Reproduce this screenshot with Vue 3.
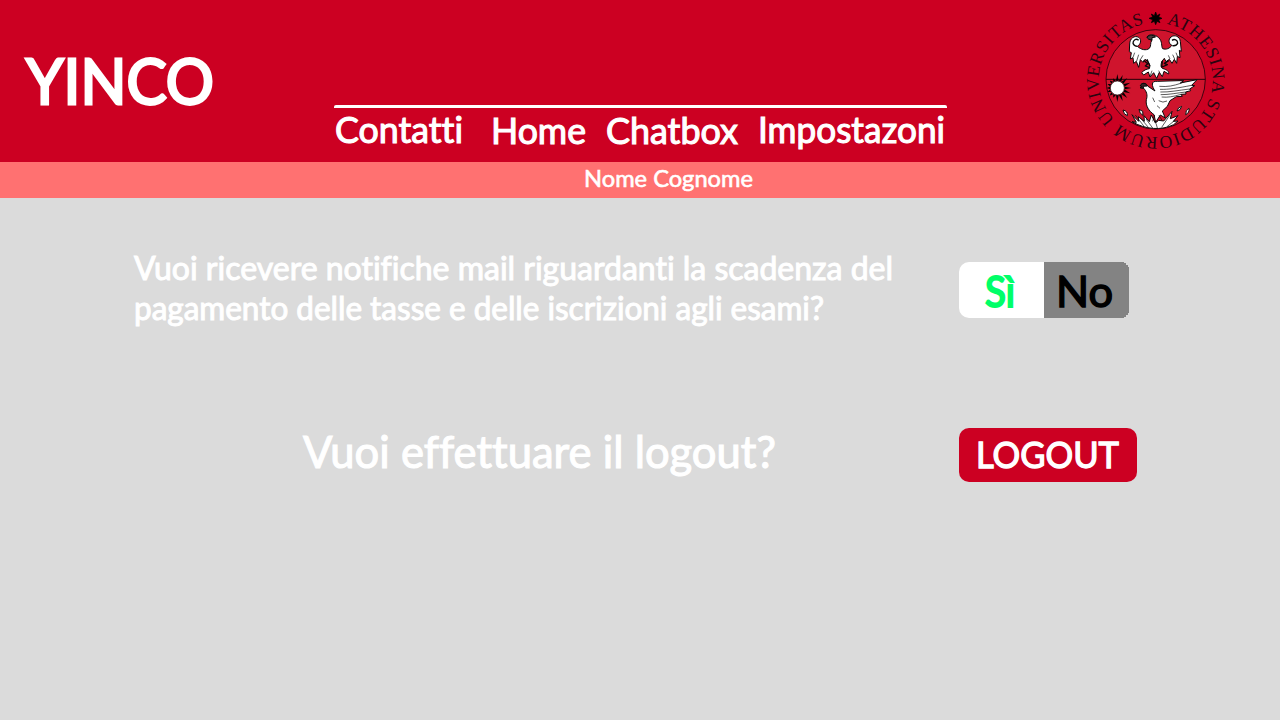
<script setup>
const nav = [
  { label: 'Contatti', width: 128, y: 143 },
  { label: 'Home', width: 95, y: 143.5 },
  { label: 'Chatbox', width: 132, y: 143.5 },
  { label: 'Impostazoni', width: 187, y: 142.5 },
]
const rays = Array.from({ length: 16 }, (_, i) => i * 22.5)
</script>

<template>
  <div class="page">
    <header class="top">
      <svg class="word brand" width="188" height="60"><text x="0" y="54" textLength="188" lengthAdjust="spacingAndGlyphs">YINCO</text></svg>
      <nav class="menu">
        <svg v-for="item in nav" :key="item.label" class="word item" :width="item.width" height="54">
          <text x="0" :y="item.y - 108" :textLength="item.width" lengthAdjust="spacingAndGlyphs">{{ item.label }}</text>
        </svg>
      </nav>
      <svg class="seal" width="160" height="160" viewBox="0 0 480 480">
        <defs>
          <path id="ring" d="M239 69A171 171 0 0 1 239 411A171 171 0 0 1 239 69" />
        </defs>
        <circle cx="239" cy="238" r="149" fill="#cf142d" stroke="#220008" stroke-width="2.5" />
        <path d="M90 238H388" stroke="#220008" stroke-width="3" />
        <text class="motto"><textPath href="#ring" startOffset="33" textLength="1006">ATHESINA STUDIORUM UNIVERSITAS</textPath></text>
        <path d="M239 36L243 47L252 42L248 51L258 55L248 59L252 68L243 64L239 74L235 64L226 68L230 59L219 55L230 51L226 42L235 47Z" fill="#000" stroke="#000" stroke-width="2" />
        <!-- upper eagle -->
        <g stroke="#090909" stroke-width="3" stroke-linejoin="round" fill="#fff">
          <path d="M228 120C220 119 214 116 213 111C218 102 236 102 248 113C260 124 255 139 260 146C271 150 281 145 288 136C278 133 276 118 285 111C296 103 311 109 313 124L316 154L310 151L312 173L304 169L302 190L295 178L288 190L280 178L270 185L265 175L257 185C254 198 253 204 265 207C276 211 279 216 278 222L264 214L259 230L250 217L242 235L233 218L222 231L217 216L203 225L197 218C203 211 211 207 220 206C223 198 221 192 215 184L207 178L201 187L193 179L188 202L181 184L173 190L171 173L163 177L166 158L160 155L161 132C161 115 176 105 188 112C198 120 194 133 184 139C195 149 210 153 220 145C227 137 221 130 228 120Z" />
          <path d="M228 120C220 119 214 116 213 111C220 104 235 105 239 111L228 113Z" fill="#4a3a3d" />
          <path d="M188 121C180 114 171 120 171 130Q174 139 184 139M288 121C295 116 305 119 305 130Q301 139 289 137" fill="none" stroke-width="4" />
          <path d="M176 158L171 172M188 164L182 183M201 166L193 179M300 158L304 168M290 164L296 177M277 166L282 177M228 212L222 229M248 212L251 217" fill="none" stroke-width="2" />
          <path d="M203 181L215 191L208 198L221 203M213 178L222 199M278 182L265 190L274 194L259 201M259 183L257 202" fill="none" stroke-width="4" />
        </g>
        <!-- sun -->
        <g transform="translate(124 264)">
          <path v-for="a in rays" :key="a" :transform="`rotate(${a})`" :d="a > 200 && a < 340 ? 'M-4 -22L0 -32L4 -22Z' : 'M-4 -22L0 -42L4 -22Z'" class="ray" />
          <circle r="21" fill="#fff" stroke="#000" stroke-width="2" />
        </g>
        <!-- rising bird -->
        <g stroke="#090909" stroke-width="3" stroke-linejoin="round" fill="#fff">
          <path d="M168 344L188 364L187 350L205 364L204 347L220 365L226 345L238 369L248 361L263 363L288 334L283 356L306 347L292 364L306 363L293 374C257 392 208 389 168 365L181 367Z" />
          <path d="M193 257C197 247 211 248 216 259L237 273C227 258 224 242 244 244L309 242L323 242L313 249L363 239L347 256L356 257L341 267L344 272L329 276L330 282L315 283L319 289L301 290L282 302L274 319L259 333L268 354L253 345L239 367L234 344C219 333 208 318 211 299C216 285 211 273 203 265L192 263L201 259Z" />
          <path d="M250 259C276 261 290 258 317 249M252 268C277 269 306 264 347 256M253 276C280 277 306 271 341 267M254 284C280 284 303 279 329 276M257 291C276 293 291 290 315 283" fill="none" stroke-width="2" />
          <path d="M248 302Q261 310 273 303M243 317L252 325M230 293L236 306M236 345L230 364M249 346L258 361" fill="none" stroke-width="2" />
          <path d="M193 257C197 247 211 248 214 258L201 259L203 265L192 263L197 259Z" fill="#3a2227" />
          <path d="M178 345L204 379M195 356L217 382M210 357L230 384M257 382L281 346M273 380L298 360M240 370L244 384" fill="none" stroke-width="2" />
          <path d="M141 330Q156 333 154 347Q143 344 141 330ZM189 328L200 334L201 346Q190 341 189 328ZM317 319Q306 321 303 333Q314 332 317 319ZM339 325Q328 330 329 344Q341 338 339 325Z" />
        </g>
      </svg>
    </header>

    <div class="user">
      <svg class="word name" width="169" height="36"><text x="0" y="25" textLength="169" lengthAdjust="spacingAndGlyphs">Nome Cognome</text></svg>
    </div>

    <main class="settings">
      <section class="row notify">
        <svg class="word question" width="759" height="92">
          <text x="0" y="32" textLength="759" lengthAdjust="spacingAndGlyphs">Vuoi ricevere notifiche mail riguardanti la scadenza del</text>
          <text x="0" y="72" textLength="690" lengthAdjust="spacingAndGlyphs">pagamento delle tasse e delle iscrizioni agli esami?</text>
        </svg>
        <div class="toggle">
          <button class="yes"><svg class="word" width="30" height="56"><text x="0" y="44.5" textLength="30" lengthAdjust="spacingAndGlyphs">Sì</text></svg></button>
          <button class="no"><svg class="word" width="57" height="56"><text x="0" y="44.5" textLength="57" lengthAdjust="spacingAndGlyphs">No</text></svg></button>
        </div>
      </section>
      <section class="row leave">
        <svg class="word ask" width="473" height="54"><text x="0" y="40" textLength="473" lengthAdjust="spacingAndGlyphs">Vuoi effettuare il logout?</text></svg>
        <button class="logout"><svg class="word" width="143" height="54"><text x="0" y="39.5" textLength="143" lengthAdjust="spacingAndGlyphs">LOGOUT</text></svg></button>
      </section>
    </main>
  </div>
</template>

<style>
body { margin: 0; overflow: hidden; }
</style>

<style scoped>
.page { width: 1280px; height: 720px; background: #dbdbdb; font-family: Lato, "Open Sans", sans-serif; font-variant-ligatures: none; }
.word { display: block; flex: none; overflow: visible; fill: #fff; stroke: #fff; stroke-width: 1px; font-weight: 400; }
button { border: 0; padding: 0; margin: 0; font-family: inherit; display: flex; justify-content: center; }
.top { height: 162px; background: #cc0022; display: flex; align-items: flex-start; }
.brand { margin: 50px 0 0 26px; font-size: 62px; stroke-width: 2.8px; }
.menu { display: flex; width: 613px; height: 54px; margin: 105px 0 0 120px; padding: 3px 1px 0; box-sizing: border-box; background: linear-gradient(#fff, #fff) top / 100% 3px no-repeat; border-radius: 2px; }
.item { font-size: 36px; stroke-width: 1.1px; }
.item:nth-child(2) { margin-left: 28px; }
.item:nth-child(3) { margin-left: 20px; }
.item:nth-child(4) { margin-left: 20px; }
.seal { flex: none; margin-left: 129px; }
.motto { font-family: "Liberation Serif", serif; font-size: 53px; fill: #2a0410; }
.ray { fill: #000; }
.user { height: 36px; background: #ff7171; }
.name { margin-left: 584px; font-size: 23.5px; stroke-width: .6px; }
.settings { padding-top: 50px; }
.row { display: flex; align-items: flex-start; }
.notify { margin-left: 134px; height: 180px; }
.question { font-size: 32px; }
.toggle { display: flex; width: 170px; height: 56px; margin: 14px 0 0 66px; }
.yes, .no { flex: 1; font-size: 43px; }
.yes { background: #fff; border-radius: 10px 0 0 10px; }
.yes .word { fill: #00ff68; stroke: #00ff68; stroke-width: 2.2px; margin-right: 3px; }
.no { background: #838383; clip-path: polygon(0 0, 80px 0, 80px 1px, 82px 1px, 82px 3px, 84px 3px, 84px 5px, 85px 5px, 85px 51px, 84px 51px, 84px 53px, 82px 53px, 82px 55px, 80px 55px, 80px 56px, 0 56px); }
.no .word { fill: #000; stroke: #000; stroke-width: 1.5px; margin-right: 5px; }
.leave { margin-left: 303px; }
.ask { font-size: 44px; stroke-width: 1.1px; }
.logout { width: 178px; height: 54px; margin-left: 183px; border-radius: 10px; background: #cc0022; font-size: 36px; }
.logout .word { stroke-width: 1.3px; margin-right: 2px; }
</style>
